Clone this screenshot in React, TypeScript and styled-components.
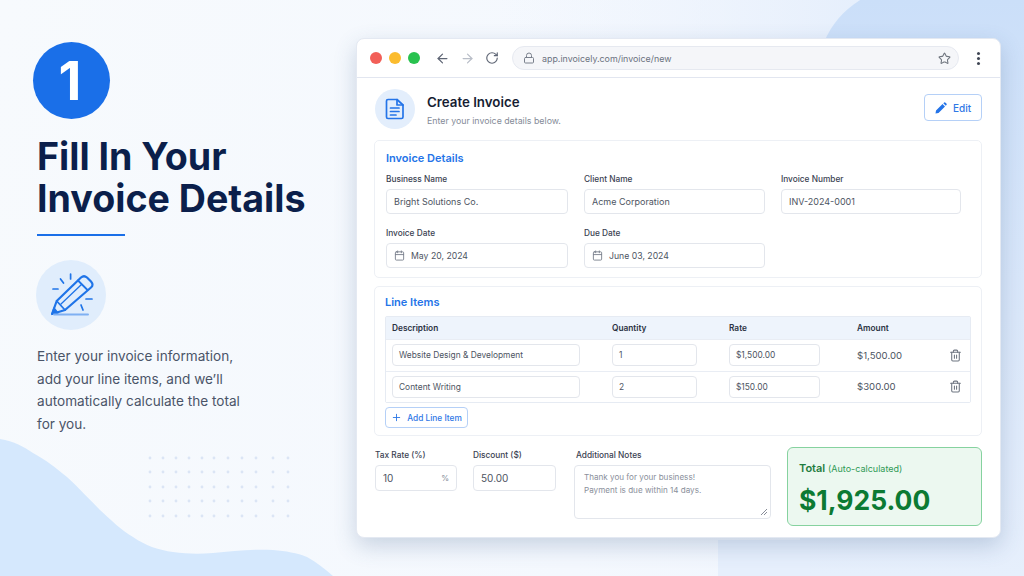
import React from 'react';
import styled, { createGlobalStyle } from 'styled-components';
import { ArrowLeft, ArrowRight, Calendar, Lock, Plus, RotateCw, Star, Trash2 } from 'lucide-react';

const GlobalStyle = createGlobalStyle`
  html, body {
    margin: 0;
    padding: 0;
    background: #f6f9fe;
  }
  * {
    box-sizing: border-box;
  }
`;

const Page = styled.div`
  position: relative;
  display: flex;
  width: 1024px;
  height: 576px;
  overflow: hidden;
  font-family: Inter, 'Noto Sans', sans-serif;
  background: linear-gradient(100deg, #f7fafd 0%, #f4f8fe 60%, #eef4fd 100%);
`;

const Backdrop = styled.svg`
  position: absolute;
  inset: 0;
`;

const Intro = styled.section`
  position: relative;
  width: 356px;
  flex: none;
  padding: 42px 0 0 37px;
`;

const StepBadge = styled.div`
  display: flex;
  align-items: center;
  justify-content: center;
  width: 77px;
  height: 77px;
  margin-left: -4px;
  padding-right: 3px;
  border-radius: 50%;
  background: #1a6fe8;
  color: #fff;
  font-size: 53px;
  font-weight: 700;
`;

const Heading = styled.h1`
  margin: 17px 0 0;
  font-size: 37.6px;
  line-height: 42px;
  font-weight: 700;
  color: #0b1f4b;
  white-space: nowrap;
`;

const Rule = styled.div`
  width: 88px;
  height: 2px;
  margin-top: 14px;
  background: #1a6fe8;
`;

const IconDisc = styled.div`
  display: flex;
  align-items: center;
  justify-content: center;
  width: 70px;
  height: 70px;
  margin: 24px 0 0 -1px;
  border-radius: 50%;
  background: #e0edfc;
`;

const Lead = styled.p`
  margin: 15px 0 0;
  width: 210px;
  font-size: 13.6px;
  line-height: 22.5px;
  color: #4a5468;
`;

const BrowserWindow = styled.main`
  position: relative;
  width: 645px;
  height: 500px;
  margin-top: 38px;
  border: 1px solid #e4e9f2;
  border-radius: 8px;
  background: #fff;
  box-shadow: 0 8px 22px rgba(60, 90, 140, 0.24);
  overflow: hidden;
`;

const Chrome = styled.header`
  display: flex;
  align-items: center;
  height: 39px;
  padding: 0 0 0 13px;
  border-bottom: 1px solid #e2e6f0;
`;

const Light = styled.span<{ $color: string }>`
  width: 12px;
  height: 12px;
  margin-right: 7px;
  border-radius: 50%;
  background: ${(props) => props.$color};
`;

const NavButtons = styled.div`
  display: flex;
  align-items: center;
  gap: 10px;
  margin: 0 13px 0 8px;
  color: #5f6675;
`;

const AddressBar = styled.div`
  display: flex;
  align-items: center;
  gap: 7px;
  width: 447px;
  height: 24px;
  padding: 0 7px 0 10px;
  border: 1px solid #e6e9f0;
  border-radius: 12px;
  background: #f5f6f9;
  font-size: 8.9px;
  color: #6b7280;
`;

const Url = styled.span`
  flex: 1;
`;

const MenuDots = styled.div`
  display: flex;
  flex-direction: column;
  gap: 2px;
  margin-left: 18px;
  & span {
    width: 3px;
    height: 3px;
    border-radius: 50%;
    background: #3f4654;
  }
`;

const Content = styled.div`
  padding: 11px 18px 0 17px;
`;

const TitleRow = styled.div`
  display: flex;
  align-items: center;
  height: 40px;
`;

const DocDisc = styled.div`
  display: flex;
  align-items: center;
  justify-content: center;
  width: 40px;
  height: 40px;
  margin-left: 1px;
  border-radius: 50%;
  background: #e3eefc;
`;

const TitleText = styled.div`
  flex: 1;
  margin-left: 12px;
  padding-top: 2px;
`;

const PageTitle = styled.div`
  font-size: 13.3px;
  line-height: 18px;
  font-weight: 600;
  color: #161d33;
`;

const Subtitle = styled.div`
  margin-top: 4px;
  font-size: 8.8px;
  line-height: 12px;
  color: #858b98;
`;

const OutlineButton = styled.button<{ $w: number; $h: number }>`
  display: flex;
  align-items: center;
  justify-content: center;
  gap: 6px;
  width: ${(props) => props.$w}px;
  height: ${(props) => props.$h}px;
  padding: 0;
  border: 1px solid #b5d0f7;
  border-radius: 4px;
  background: #fff;
  color: #2f78e6;
  font: 500 9.2px Inter, sans-serif;
`;

const EditButton = styled(OutlineButton)`
  margin-top: -3px;
  font-size: 10px;
`;

const Card = styled.section<{ $h: number }>`
  height: ${(props) => props.$h}px;
  margin-top: 8px;
  padding: 8px 10px;
  border: 1px solid #edf0f5;
  border-radius: 5px;
`;

const FirstCard = styled(Card)`
  margin-top: 11px;
  padding: 10px 11px;
`;

const CardTitle = styled.h2`
  margin: 0;
  font-size: 11px;
  line-height: 14px;
  font-weight: 600;
  color: #2474e8;
`;

const FieldGrid = styled.div`
  display: grid;
  grid-template-columns: 182px 181px 180px;
  column-gap: 16px;
  row-gap: 14px;
  margin-top: 9px;
`;

const Field = styled.div<{ $w?: number; $ml?: number }>`
  width: ${(props) => (props.$w ? `${props.$w}px` : 'auto')};
  margin-left: ${(props) => props.$ml ?? 0}px;
`;

const Label = styled.div`
  margin-bottom: 4px;
  font-size: 8.3px;
  line-height: 11px;
  font-weight: 500;
  color: #3b4252;
`;

const NotesLabel = styled(Label)`
  margin-left: 2px;
`;

const InputBox = styled.div<{ $h?: number; $size?: number }>`
  display: flex;
  align-items: center;
  gap: 6px;
  height: ${(props) => props.$h ?? 25}px;
  padding: 0 7px;
  border: 1px solid #e3e6ec;
  border-radius: 4px;
  background: #fff;
  font-size: ${(props) => props.$size ?? 9}px;
  color: #4d5462;
`;

const Table = styled.div`
  margin-top: 7px;
  border: 1px solid #e6ebf3;
  border-radius: 2px;
`;

const TableRow = styled.div<{ $head?: boolean }>`
  display: grid;
  grid-template-columns: 220px 117px 128px 92px 21px;
  align-items: center;
  height: ${(props) => (props.$head ? 22 : 31.5)}px;
  padding-left: 6px;
  background: ${(props) => (props.$head ? '#eef4fc' : '#fff')};
  font-size: 8.3px;
  font-weight: ${(props) => (props.$head ? 600 : 400)};
  color: ${(props) => (props.$head ? '#2b3242' : '#4d5462')};
  & + & {
    border-top: 1px solid #e9edf4;
  }
`;

const CellInput = styled(InputBox)<{ $w: number }>`
  width: ${(props) => props.$w}px;
  height: 22px;
  padding: 0 6px;
  font-size: 8.4px;
`;

const Amount = styled.span`
  font-size: 9.6px;
`;

const AddButton = styled(OutlineButton)`
  margin-top: 4px;
  gap: 5px;
  font-size: 8.3px;
`;

const BottomRow = styled.div`
  display: flex;
  align-items: flex-start;
  margin: 11px 0 0 1px;
`;

const BottomFields = styled.div`
  display: flex;
  padding-top: 3px;
`;

const Suffix = styled.span`
  margin-left: auto;
  font-size: 8px;
  color: #858b98;
`;

const NotesBox = styled.div`
  position: relative;
  height: 54px;
  padding: 5px 9px;
  border: 1px solid #e3e6ec;
  border-radius: 4px;
  font-size: 8.1px;
  line-height: 13px;
  color: #8a8f9b;
`;

const Grip = styled.svg`
  position: absolute;
  right: 2px;
  bottom: 2px;
`;

const TotalCard = styled.div`
  width: 195px;
  height: 79px;
  margin-left: 16px;
  padding: 13px 11px;
  border: 1px solid #86d29f;
  border-radius: 6px;
  background: #ecf8f0;
`;

const TotalLabel = styled.div`
  font-size: 11px;
  line-height: 14px;
  font-weight: 600;
  color: #1f7d3f;
  & small {
    font-size: 9px;
    font-weight: 400;
    color: #2f9a55;
  }
`;

const TotalValue = styled.div`
  margin-top: 8px;
  font-size: 26.5px;
  line-height: 32px;
  font-weight: 700;
  color: #0b7a33;
`;

const DateField = ({ label, value }: { label: string; value: string }) => (
  <Field>
    <Label>{label}</Label>
    <InputBox $size={8.7}>
      <Calendar size={11} color="#7a808c" />
      {value}
    </InputBox>
  </Field>
);

const dotXs = [150, 163, 176, 189, 202, 214, 228, 242, 256, 273, 288];
const dotYs = [458, 472, 487, 501, 516];

const lines = [
  { description: 'Website Design & Development', quantity: '1', rate: '$1,500.00', amount: '$1,500.00' },
  { description: 'Content Writing', quantity: '2', rate: '$150.00', amount: '$300.00' },
];

const PencilArt = () => (
  <svg width="46" height="46" viewBox="0 0 46 46" fill="none" stroke="#1f74e8" strokeLinecap="round" strokeLinejoin="round">
    <path d="M4 42 L8.7 29 L33 5.5 Q36 3 39 5.5 L43 9.5 Q46 13 43 15.5 L17 38 Z" strokeWidth="2.2" />
    <path d="M8.7 29 L17 38 M30 8.5 L39.5 18" strokeWidth="1.8" />
    <path d="M13 32 L33.5 12.5" strokeWidth="1.3" />
    <path d="M4 42 L6 36 L10 41 Z" fill="#1f74e8" strokeWidth="1.4" />
    <path d="M6 42.5 H40" stroke="#7fb0f2" strokeWidth="2" />
    <path d="M22.6 2 V7 M12.5 7 L15.5 11 M5 17 H10 M38 27 H44 M33 33 L35 38" strokeWidth="1.7" />
  </svg>
);

const DocIcon = () => (
  <svg width="20" height="22" viewBox="0 0 20 22" fill="none" stroke="#2474e8" strokeWidth="1.7" strokeLinecap="round" strokeLinejoin="round">
    <path d="M3 1.5 H12 L18 7 V19 Q18 20.5 16.5 20.5 H3 Q1.5 20.5 1.5 19 V3 Q1.5 1.5 3 1.5 Z" />
    <path d="M12 1.5 V7 H18 M5.5 10 H14 M5.5 13.5 H14 M5.5 17 H11" />
  </svg>
);

const PenIcon = () => (
  <svg width="12" height="12" viewBox="0 0 12 12" fill="#2474e8">
    <path d="M0.5 11.5 L1 8.5 L7.5 2 L10 4.5 L3.5 11 Z M8.3 1.2 L9.2 0.4 Q9.7 0 10.2 0.4 L11.6 1.8 Q12 2.3 11.6 2.8 L10.8 3.7 Z" />
  </svg>
);

const App = () => {
  return (
    <>
      <GlobalStyle />
      <Page>
        <Backdrop width="1024" height="576" viewBox="0 0 1024 576">
          <defs>
            <linearGradient id="cornerFill" x1="0" y1="0" x2="0" y2="1">
              <stop offset="0" stopColor="#cbdff9" />
              <stop offset="0.55" stopColor="#dbe8fa" />
              <stop offset="1" stopColor="#e6effc" />
            </linearGradient>
            <linearGradient id="topFade" x1="0" y1="0" x2="1" y2="0">
              <stop offset="0" stopColor="#eef4fd" stopOpacity="0" />
              <stop offset="1" stopColor="#e6effc" />
            </linearGradient>
          </defs>
          <path d="M500 0 H860 C845 12 833 24 826 38 L826 60 H500 Z" fill="url(#topFade)" />
          <path d="M860 0 C842 12 832 24 824 42 C810 80 800 120 800 200 V576 H1024 V0 Z" fill="url(#cornerFill)" />
          <path d="M718 576 V540 H810 V576 Z" fill="#e6effc" />
          <path
            d="M0 439 C14 441 24 447 33 453 C46 460 56 468 67 477 C78 487 89 499 100 510 C111 520 121 530 133 537 C146 546 159 550 173 552 C187 554 200 554 213 553 C233 551 253 549 273 550 C286 551 297 553 307 557 C316 562 325 569 333 576 H0 Z"
            fill="#d5e8fd"
          />
          {dotYs.map((y) =>
            dotXs.map((x) => <circle key={`${x}-${y}`} cx={x} cy={y} r="1.4" fill="#dbe5f5" />)
          )}
        </Backdrop>

        <Intro>
          <StepBadge>1</StepBadge>
          <Heading>
            Fill In Your
            <br />
            Invoice Details
          </Heading>
          <Rule />
          <IconDisc>
            <PencilArt />
          </IconDisc>
          <Lead>
            Enter your invoice information, add your line items, and we’ll automatically calculate the total for you.
          </Lead>
        </Intro>

        <BrowserWindow>
          <Chrome>
            <Light $color="#f25f58" />
            <Light $color="#fbbc2e" />
            <Light $color="#29c24f" />
            <NavButtons>
              <ArrowLeft size={15} />
              <ArrowRight size={15} color="#b9bec8" />
              <RotateCw size={14} />
            </NavButtons>
            <AddressBar>
              <Lock size={12} color="#7a808c" />
              <Url>app.invoicely.com/invoice/new</Url>
              <Star size={13} color="#70767f" />
            </AddressBar>
            <MenuDots>
              <span />
              <span />
              <span />
            </MenuDots>
          </Chrome>
          <Content>
            <TitleRow>
              <DocDisc>
                <DocIcon />
              </DocDisc>
              <TitleText>
                <PageTitle>Create Invoice</PageTitle>
                <Subtitle>Enter your invoice details below.</Subtitle>
              </TitleText>
              <EditButton $w={58} $h={27}>
                <PenIcon />
                Edit
              </EditButton>
            </TitleRow>

            <FirstCard $h={138}>
              <CardTitle>Invoice Details</CardTitle>
              <FieldGrid>
                <Field>
                  <Label>Business Name</Label>
                  <InputBox>Bright Solutions Co.</InputBox>
                </Field>
                <Field>
                  <Label>Client Name</Label>
                  <InputBox>Acme Corporation</InputBox>
                </Field>
                <Field>
                  <Label>Invoice Number</Label>
                  <InputBox>INV-2024-0001</InputBox>
                </Field>
                <DateField label="Invoice Date" value="May 20, 2024" />
                <DateField label="Due Date" value="June 03, 2024" />
              </FieldGrid>
            </FirstCard>

            <Card $h={150}>
              <CardTitle>Line Items</CardTitle>
              <Table>
                <TableRow $head>
                  <span>Description</span>
                  <span>Quantity</span>
                  <span>Rate</span>
                  <span>Amount</span>
                </TableRow>
                {lines.map((line) => (
                  <TableRow key={line.description}>
                    <CellInput $w={188}>{line.description}</CellInput>
                    <CellInput $w={85}>{line.quantity}</CellInput>
                    <CellInput $w={91}>{line.rate}</CellInput>
                    <Amount>{line.amount}</Amount>
                    <Trash2 size={13} color="#6f7682" />
                  </TableRow>
                ))}
              </Table>
              <AddButton $w={83} $h={21}>
                <Plus size={11} />
                Add Line Item
              </AddButton>
            </Card>

            <BottomRow>
              <BottomFields>
                <Field $w={82}>
                  <Label>Tax Rate (%)</Label>
                  <InputBox $h={26} $size={10}>
                    10
                    <Suffix>%</Suffix>
                  </InputBox>
                </Field>
                <Field $w={83} $ml={16}>
                  <Label>Discount ($)</Label>
                  <InputBox $h={26} $size={10}>50.00</InputBox>
                </Field>
                <Field $w={197} $ml={18}>
                  <NotesLabel>Additional Notes</NotesLabel>
                  <NotesBox>
                    Thank you for your business!
                    <br />
                    Payment is due within 14 days.
                    <Grip width="8" height="8" viewBox="0 0 8 8" stroke="#7a808c" strokeWidth="0.9">
                      <path d="M1 7 L7 1 M4 7 L7 4" />
                    </Grip>
                  </NotesBox>
                </Field>
              </BottomFields>
              <TotalCard>
                <TotalLabel>
                  Total <small>(Auto-calculated)</small>
                </TotalLabel>
                <TotalValue>$1,925.00</TotalValue>
              </TotalCard>
            </BottomRow>
          </Content>
        </BrowserWindow>
      </Page>
    </>
  );
};

export default App;
